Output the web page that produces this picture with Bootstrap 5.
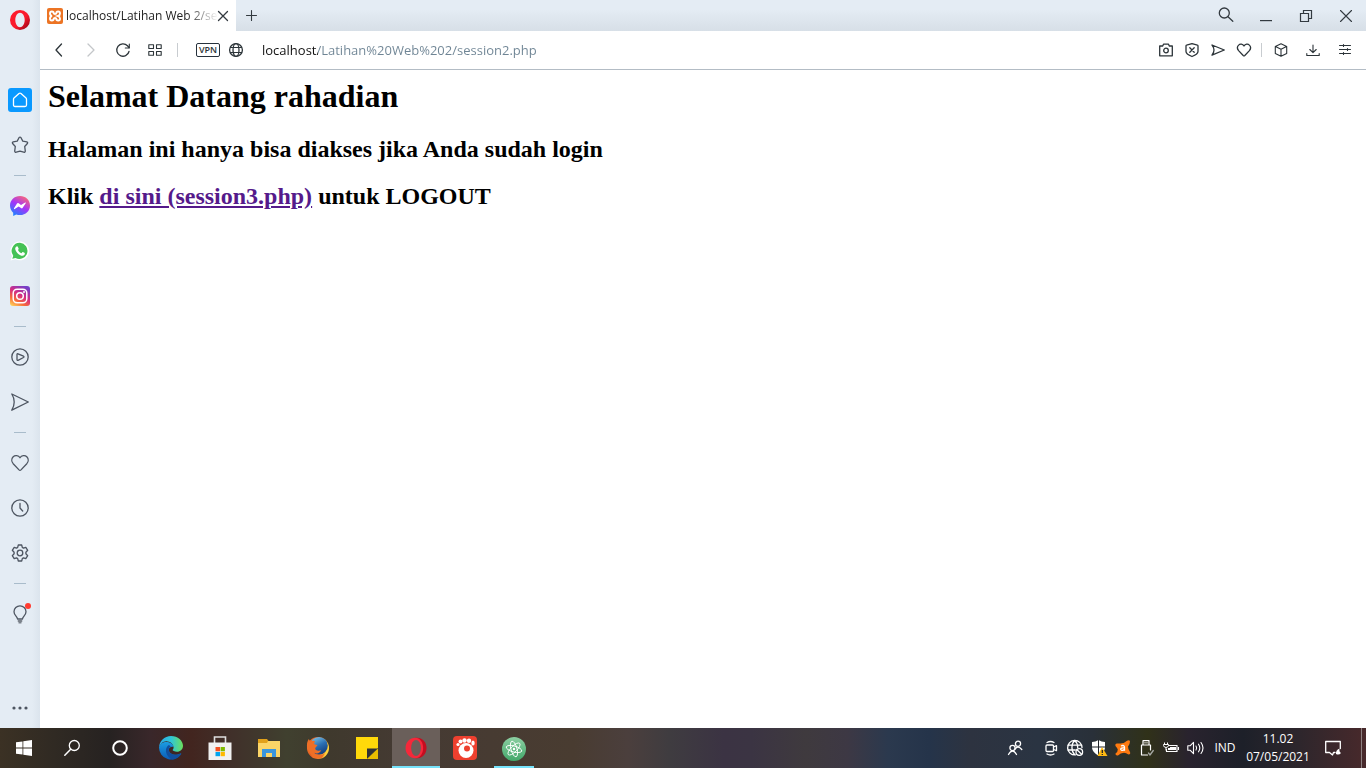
<!DOCTYPE html>
<html lang="id">
<head>
<meta charset="utf-8">
<meta name="viewport" content="width=device-width, initial-scale=1">
<title>localhost/Latihan Web 2/session2.php</title>
<link href="https://cdn.jsdelivr.net/npm/bootstrap@5.3.0/dist/css/bootstrap.min.css" rel="stylesheet">
<style>
  body { font-family: "Open Sans", "Noto Sans", sans-serif; font-size: 12px; line-height: 18px; color: #111; background: #fff; }
  button { background: none; border: 0; padding: 0; color: inherit; display: flex; align-items: center; justify-content: center; flex: none; }
  svg { display: block; flex: none; overflow: visible; }
  .ln { fill: none; stroke: currentColor; stroke-width: 1.3; stroke-linejoin: round; stroke-linecap: round; }

  .rail { width: 40px; background: linear-gradient(90deg, #e4ecf4 80%, #dbe4ed); color: #4d5561; }
  .rail button { width: 40px; height: 45px; }
  .rail .brand { height: 40px; margin-bottom: 37px; }
  .rail .more { height: 40px; }
  .rail hr { width: 12px; height: 1px; margin: 8px 0 7px; border: 0; background: #a9bccb; opacity: 1; flex: none; }
  .home-tile { width: 24px; height: 24px; border-radius: 3px; background: #0a99ff; color: #fff; }

  .tabstrip { height: 31px; background: linear-gradient(#e4ecf4 30%, #d7dfe7); color: #333a40; }
  .tab { width: 196px; background: #fff; padding: 0 8px 0 7px; }
  .tab-title { font-size: 12px; color: #222; margin-left: 3px; -webkit-mask-image: linear-gradient(90deg, #000 120px, transparent 152px); mask-image: linear-gradient(90deg, #000 120px, transparent 152px); }
  .plus { width: 31px; }
  .win { width: 40px; }

  .toolbar { height: 39px; border-bottom: 1px solid #b3bcc5; color: #2c3439; padding-left: 3px; }
  .tool { width: 32px; height: 32px; }
  .tool-s { width: 26px; height: 32px; }
  .dim { color: #c3c6c9; }
  .bar { width: 1px; height: 14px; background: #c8ccd0; }
  .vpn { width: 24px; height: 14px; border: 1px solid #26313c; border-radius: 2px; font-size: 9px; line-height: 12px; font-weight: 600; margin-left: 18px; }
  .url { border: 0; outline: 0; background: linear-gradient(90deg, #111 56px, #6e8494 56px) text; -webkit-background-clip: text; -webkit-text-fill-color: transparent; font-size: 13px; min-width: 0; padding: 0; margin-left: 12px; }

  .page { padding: 8px; font-family: "Liberation Serif", serif; color: #000; }
  .page h1 { font-size: 32px; line-height: 37px; font-weight: 700; margin: 0 0 21px; }
  .page h2 { font-size: 24px; line-height: 27px; font-weight: 700; margin: 0 0 20px; }
  .page a { color: #551a8b; }

  .taskbar { height: 40px; color: #fff; background: linear-gradient(90deg, #3b3124 0, #302a23 4%, #262221 8%, #39272a 11%, #42251f 14%, #40302a 17%, #40402f 21%, #3f392d 24%, #453a33 30%, #493c31 42%, #4b3f3d 46%, #3f3c40 49%, #3b3343 53%, #3b3443 55%, #3f3a3e 59%, #3d3844 62%, #2b394e 65%, #25344a 68%, #2d3340 71%, #2a3442 76%, #293039 80%, #303119 84%, #29232e 87%, #1d2029 91%, #2d262c 95%, #48292b 100%); }
  .task { width: 48px; height: 40px; }
  .apps { gap: 1px; margin-left: 3px; }
  .active { background: #6a5f5a; border-bottom: 2px solid #76e3fb; padding-top: 2px; }
  .running { padding-top: 2px; background: linear-gradient(#76e3fb, #76e3fb) center bottom / 40px 2px no-repeat; }
  .tray { width: 24px; height: 40px; }
  .people { margin-right: 12px; }
  .lang { width: 36px; }
  .clock { width: 70px; height: 40px; font-size: 12px; line-height: 18px; }
  .note { width: 40px; margin-right: 8px; }
  .desk { width: 5px; height: 40px; border-left: 1px solid #8d8080; }
</style>
</head>
<body class="vh-100 d-flex flex-column overflow-hidden">

<div class="d-flex flex-grow-1 overflow-hidden">
  <nav class="rail d-flex flex-column align-items-center flex-shrink-0" aria-label="Sidebar">
    <button class="brand" aria-label="Opera"><svg width="20" height="20" viewBox="0 0 20 20"><defs><linearGradient id="o1" x2="1" y2="1"><stop offset="0" stop-color="#ff1b2d"/><stop offset=".55" stop-color="#fa1a2c"/><stop offset="1" stop-color="#8c0012"/></linearGradient></defs><path fill="url(#o1)" fill-rule="evenodd" d="M10 0a10 10 0 1 0 0 20 10 10 0 1 0 0-20zM10 2.800c2.600 0 4.700 3.200 4.700 7.200s-2.100 7.200-4.700 7.200S5.300 14 5.300 10 7.400 2.800 10 2.800z"/></svg></button>
    <button aria-label="Speed dial"><span class="home-tile d-flex align-items-center justify-content-center"><svg class="ln" width="16" height="16" viewBox="0 0 16 16"><path d="M1.500 7.200Q1.500 6.500 2 6L7 1.500q1-.8 2 0L14 6q.5.500.5 1.200V13q0 1.500-1.500 1.500H3Q1.500 14.500 1.500 13z"/></svg></span></button>
    <button aria-label="Pinboard"><svg class="ln" width="18" height="18" viewBox="0 0 18 18"><path d="M8 1.700q1-1.300 2 0l1.800 3.400 4 .7q1.300.5.600 1.700l-2.700 3 .6 4.700q-.2 1.400-1.600 1L9 15.200l-3.700 1q-1.400.4-1.600-1l.6-4.700-2.700-3Q.9 6.300 2.200 5.800l4-.7z"/></svg></button>
    <hr>
    <button aria-label="Messenger"><svg width="20" height="20" viewBox="0 0 20 20"><defs><linearGradient id="m1" x1=".2" y1="1" x2=".8" y2="0"><stop offset="0" stop-color="#1687ff"/><stop offset=".5" stop-color="#a334fa"/><stop offset="1" stop-color="#ff6b70"/></linearGradient></defs><path fill="url(#m1)" d="M10 0C4.300 0 0 4.100 0 9.600c0 2.900 1.300 5.500 3.200 7.200V20l3-1.500c1.200.4 2.500.6 3.800.6 5.700 0 10-4.200 10-9.600S15.700 0 10 0z"/><path fill="#fff" d="M4 12.300l3-4.700q.7-1 1.700-.3l2.300 1.700 4.200-2.400q1-.4.500.6l-3 4.600q-.6 1-1.700.3L8.700 10.500l-4 2.600q-1 .2-.7-.8z"/></svg></button>
    <button aria-label="WhatsApp"><svg width="18" height="18" viewBox="0 0 18 18"><path fill="#fff" d="M9-.5A9.400 9.400 0 0 0 1 14L-.5 18.500 4.500 17.300A9.400 9.400 0 1 0 9-.5z"/><path fill="#45c255" d="M9 .8A8.100 8.100 0 0 0 2.300 13.800L1.300 16.800 4.500 16A8.100 8.100 0 1 0 9 .8z"/><path fill="#fff" d="M5.500 4.500q.8-.6 1.300.2l.9 2q.1.400-.7 1.300c1 1.900 2 2.700 3.500 3.300l1-1.200q.3-.3 2.300.9.300 2.400-2.300 2.800C8.500 14 4 9.500 4.200 6.600q.2-1.500 1.300-2.100z"/></svg></button>
    <button aria-label="Instagram"><svg width="20" height="20" viewBox="0 0 20 20"><defs><linearGradient id="i1" x1=".1" y1="1" x2=".7" y2="0"><stop offset="0" stop-color="#fed35a"/><stop offset=".3" stop-color="#f76b3a"/><stop offset=".6" stop-color="#d52c83"/><stop offset="1" stop-color="#7540c8"/></linearGradient></defs><rect width="20" height="20" rx="3" fill="url(#i1)"/><g fill="none" stroke="#fff" stroke-width="1.500"><rect x="3.200" y="3.200" width="13.600" height="13.600" rx="4"/><circle cx="10" cy="10" r="3.300"/></g><circle cx="14" cy="6" r="1" fill="#fff"/></svg></button>
    <hr>
    <button aria-label="Player"><svg class="ln" width="18" height="18" viewBox="0 0 18 18"><circle cx="9" cy="9" r="8.200"/><path d="M6 6.500q0-1 1-.7l5.500 2.400q1 .6 0 1.300L7 12.300q-1 .3-1-.7z"/></svg></button>
    <button aria-label="My Flow"><svg class="ln" width="18" height="18" viewBox="0 0 18 18"><path d="M.8 1L17.300 9 .8 17.200q2.400-4 2.400-8.200T.8 1z"/></svg></button>
    <hr>
    <button aria-label="Bookmarks"><svg class="ln" width="18" height="18" viewBox="0 0 18 18"><path d="M9 3.800C10.500 1.200 14 .9 15.800 2.700c2 2 1.700 5 0 7L10 15.900q-1 1-2 0L2.200 9.700c-1.700-2-2-5 0-7C4 .9 7.500 1.200 9 3.800z"/></svg></button>
    <button aria-label="History"><svg class="ln" width="18" height="18" viewBox="0 0 18 18"><circle cx="9" cy="9" r="8.200"/><path d="M9 4.500V9l2.700 3"/></svg></button>
    <button aria-label="Settings"><svg class="ln" width="18" height="18" viewBox="0 0 18 18"><circle cx="9" cy="9" r="2.800"/><path d="M7.300 1h3.400l.6 2.400 1.200.7 2.300-.8 1.900 3-1.800 1.900v1.600l1.800 1.900-1.900 3-2.300-.8-1.200.7-.6 2.400H7.300l-.6-2.400-1.200-.7-2.300.8-1.900-3 1.800-1.900V8.200L1.300 6.300l1.900-3 2.300.8 1.200-.7z"/></svg></button>
    <hr>
    <button aria-label="Tips"><svg class="ln" width="18" height="20" viewBox="0 0 18 20"><path d="M6.500 15C6.500 12.500 3 11.500 3 7.800a6 6 0 0 1 12 0c0 3.700-3.500 4.700-3.500 7.200z"/><path d="M7.500 17h3M8.300 18.700h1.400" stroke="#7b828b" stroke-width="1.800"/><circle cx="17" cy="2" r="3" fill="#ff3b30" stroke="none"/></svg></button>
    <button class="more mt-auto" aria-label="More"><svg width="16" height="4" viewBox="0 0 16 4" fill="currentColor"><circle cx="2" cy="2" r="1.600"/><circle cx="8" cy="2" r="1.600"/><circle cx="14" cy="2" r="1.600"/></svg></button>
  </nav>

  <div class="flex-grow-1 d-flex flex-column overflow-hidden">
    <header class="tabstrip d-flex align-items-stretch flex-shrink-0">
      <div class="tab d-flex align-items-center">
        <svg width="16" height="16" viewBox="0 0 16 16"><rect width="16" height="16" rx="2" fill="#ec7424"/><path d="M4.800 3.500Q3 3.500 3 5.500T5 8q-2 .5-2 2.500t1.800 2Q6.800 12.500 6.800 10.500 8 9.500 9.200 10.500q0 2 2 2T13 10.500 11 8q2-.5 2-2.500t-1.800-2q-2 0-2 2Q8 6.500 6.800 5.500q0-2-2-2z" fill="none" stroke="#fff" stroke-width="1.900"/></svg>
        <span class="tab-title text-nowrap">localhost/Latihan Web 2/se</span>
        <button class="ms-auto" aria-label="Close tab"><svg class="ln" width="12" height="12" viewBox="0 0 12 12"><path d="M1.500 1.500l9 9m0-9l-9 9"/></svg></button>
      </div>
      <button class="plus" aria-label="New tab"><svg class="ln" width="12" height="12" viewBox="0 0 12 12"><path d="M.5 5.500h10m-5-5v10" stroke-width="1.100"/></svg></button>
      <button class="win ms-auto" aria-label="Search tabs"><svg class="ln" width="16" height="18" viewBox="0 0 16 18"><circle cx="6.300" cy="6" r="5"/><path d="M10 9.700l4.800 4.500"/></svg></button>
      <button class="win" aria-label="Minimize"><svg width="12" height="12" viewBox="0 0 12 12"><path d="M0 10h12v1.200H0z" fill="currentColor"/></svg></button>
      <button class="win" aria-label="Restore"><svg width="12" height="12" viewBox="0 0 12 12" fill="none" stroke="currentColor"><path d="M.5 3.500h8v8h-8zM3.500 3.500v-3h8v8h-3" stroke-width="1.200"/></svg></button>
      <button class="win" aria-label="Close window"><svg class="ln" width="12" height="12" viewBox="0 0 12 12"><path d="M.5.5l11 11m0-11l-11 11" stroke-width="1.100"/></svg></button>
    </header>

    <div class="toolbar d-flex align-items-center flex-shrink-0">
      <button class="tool" aria-label="Back"><svg class="ln" width="8" height="14" viewBox="0 0 8 14"><path d="M6.500 1L1 7l5.500 6"/></svg></button>
      <button class="tool dim" aria-label="Forward"><svg class="ln" width="8" height="14" viewBox="0 0 8 14"><path d="M1 1l6 6-6 6"/></svg></button>
      <button class="tool" aria-label="Reload"><svg class="ln" width="14" height="14" viewBox="0 0 14 14"><path d="M13 8.500a6.200 6.200 0 1 1-1.500-5.700L13 4.500"/><path d="M13.300 1v4h-4" stroke-width="1.100"/></svg></button>
      <button class="tool" aria-label="Speed dial tiles"><svg class="ln" width="14" height="12" viewBox="0 0 14 12"><path d="M.8.800h4.700v3.700H.8zM8.500.800h4.700v3.700H8.500zM.8 7.500h4.700v3.700H.8zM8.500 7.500h4.700v3.700H8.500z" stroke-width="1.100"/></svg></button>
      <span class="bar" style="margin-left:6px"></span>
      <button class="vpn" aria-label="VPN">VPN</button>
      <button class="tool-s ms-1" aria-label="Site information"><svg class="ln" width="14" height="14" viewBox="0 0 14 14"><circle cx="5" cy="7" r="6.400" transform="translate(1)"/><ellipse cx="6" cy="7" rx="3" ry="6.400"/><path d="M.5 4.500h11m-11 5h11" stroke-width="1"/></svg></button>
      <input class="url flex-grow-1 me-3" type="text" aria-label="Address" value="localhost/Latihan%20Web%202/session2.php">
      <button class="tool-s" aria-label="Snapshot"><svg class="ln" width="14" height="14" viewBox="0 0 14 14"><path d="M.7 3h3L4.500 1.200h5L10.300 3h3v9.800H.7z"/><circle cx="7" cy="7.500" r="2.300"/></svg></button>
      <button class="tool-s" aria-label="Ad blocker"><svg class="ln" width="14" height="14" viewBox="0 0 14 14"><path d="M7 .7l5.500 1.500Q13 2.300 13 3v5.500c0 2.500-3 3.800-6 5-3-1.200-6-2.500-6-5V3q0-.7.500-.8z"/><path d="M4.800 4.800l4.400 4.400m0-4.400L4.800 9.200"/></svg></button>
      <button class="tool-s" aria-label="Send to My Flow"><svg class="ln" width="14" height="14" viewBox="0 0 14 14"><path d="M1 2l12.300 5L1 12.200Q3 9.500 3 7T1 2z"/></svg></button>
      <button class="tool-s" aria-label="Add to bookmarks"><svg class="ln" width="14" height="14" viewBox="0 0 14 14"><path d="M7 3C8.200.8 11 .6 12.400 2.100c1.500 1.500 1.200 4 0 5.500L7.800 12.500q-.8.700-1.600 0L1.600 7.600C.4 6.100.1 3.600 1.600 2.100 3 .6 5.800.8 7 3z"/></svg></button>
      <span class="bar ms-1"></span>
      <button class="tool ms-1" aria-label="Extensions"><svg class="ln" width="14" height="14" viewBox="0 0 14 14"><path d="M6 .7l5.700 2.700v7L6 13.300.3 10.400v-7zM.5 3.500L6 6.200l5.500-2.700M6 6.200v7" stroke-width="1.100"/></svg></button>
      <button class="tool" aria-label="Downloads"><svg class="ln" width="14" height="14" viewBox="0 0 14 14"><path d="M6 2v7.500M2.800 6.500L6 9.700l3.200-3.200M-.2 10.500v2h12.400v-2" stroke-width="1.100"/></svg></button>
      <button class="tool me-1" aria-label="Easy setup"><svg class="ln" width="14" height="14" viewBox="0 0 14 14"><path d="M.5 2.500h11M.5 6.500h11M.5 10.500h11M4.500 1.500v2M8.500 5.500v2M4.500 9.500v2" stroke-width="1.100"/></svg></button>
    </div>

    <main class="page flex-grow-1 overflow-auto">
      <h1>Selamat Datang rahadian</h1>
      <h2>Halaman ini hanya bisa diakses jika Anda sudah login</h2>
      <h2>Klik <a href="session3.php">di sini (session3.php)</a> untuk LOGOUT</h2>
    </main>
  </div>
</div>

<footer class="taskbar d-flex align-items-center flex-shrink-0">
  <button class="task" aria-label="Start"><svg width="16" height="16" viewBox="0 0 16 16" fill="#fff"><path d="M0 2.300l6.500-.9v6.100H0zM7.300 1.200L16 0v7.500H7.300zM0 8.400h6.500v6.100L0 13.700zM7.300 8.400H16V16l-8.700-1.300z"/></svg></button>
  <button class="task" aria-label="Search"><svg class="ln" width="16" height="16" viewBox="0 0 16 16"><circle cx="10.300" cy="5.500" r="5"/><path d="M6.700 9.300L.8 15.200" stroke-width="1.500"/></svg></button>
  <button class="task" aria-label="Cortana"><svg width="16" height="16" viewBox="0 0 16 16"><circle cx="8" cy="8" r="6.800" fill="none" stroke="#fff" stroke-width="2"/></svg></button>
  <div class="apps d-flex">
    <button class="task" aria-label="Edge"><svg width="24" height="24" viewBox="0 0 24 24"><defs><linearGradient id="e1"><stop offset="0" stop-color="#2aa9e8"/><stop offset=".5" stop-color="#2fc5d8"/><stop offset="1" stop-color="#6be05c"/></linearGradient><linearGradient id="e2" x2="0" y2="1"><stop offset="0" stop-color="#1b9de2"/><stop offset="1" stop-color="#0b5cb8"/></linearGradient></defs><path fill="url(#e2)" d="M0 11.500C1 7 5 5.500 8.500 6c4 .5 6 3 6 5-2-1-5 .5-4.700 3 .3 4 6.200 6.500 11.700 3.500.5-.2.800.2.500.6A12 12 0 0 1 0 11.500z"/><path fill="#104f9f" d="M9 9.500c-4 4-2 11 4.500 14.300 4 -.5 7-2.800 8.800-5.800.3-.5-.1-.8-.6-.5-6 2.800-12 .3-12-4 0-1.500 1-2.600 2-3.100-.8-1-1.700-1.300-2.700-.9z"/><path fill="url(#e1)" d="M0 12C0 5 5.400 0 12 0c7 0 12 4.800 12 9.800 0 3.500-2.700 6-6 6-2.500 0-4.400-1-4.400-1.700 0-.5 1-1 1-2.800C14.600 8 11 5.200 7.300 5.200 4 5.200.7 8 0 12z"/></svg></button>
    <button class="task" aria-label="Microsoft Store"><svg width="24" height="24" viewBox="0 0 24 24"><path d="M6.500 8V1h11v7" fill="none" stroke="#dedede" stroke-width="1.600"/><path d="M.5 6.500h23V24H.5z" fill="#f1f1f1"/><path fill="#f25022" d="M7.500 11H12v4.300H7.500z"/><path fill="#7fba00" d="M12.600 11h4.300v4.300h-4.300z"/><path fill="#00a4ef" d="M7.500 16H12v4.200H7.500z"/><path fill="#ffb900" d="M12.600 16h4.300v4.200h-4.300z"/></svg></button>
    <button class="task" aria-label="File Explorer"><svg width="22" height="20" viewBox="0 0 22 20"><path d="M0 1h9l1.500 2H22v15H0z" fill="#e1a11a"/><path d="M0 5h9l1-2h12v16H0z" fill="#fbd567"/><path d="M4 19v-8h14v8h-4v-4H8v4z" fill="#3a96dd"/></svg></button>
    <button class="task" aria-label="Firefox"><svg width="24" height="24" viewBox="0 0 24 24"><defs><linearGradient id="f1" x2="1" y2=".3"><stop offset="0" stop-color="#ef7a2c"/><stop offset=".5" stop-color="#e4561f"/><stop offset=".8" stop-color="#f08a28"/><stop offset="1" stop-color="#ffd23b"/></linearGradient><linearGradient id="f2" x1=".2" x2=".7" y2="1"><stop offset="0" stop-color="#7cc4e6"/><stop offset=".5" stop-color="#2b6fb4"/><stop offset="1" stop-color="#143a78"/></linearGradient></defs><circle cx="12" cy="12" r="11" fill="url(#f1)"/><circle cx="13" cy="9.800" r="8.800" fill="url(#f2)"/><path fill="#ee6f27" d="M1 12Q.5 6 2.800 3l1.500 2.500Q6.500 4.500 9 5L8 8l3.500 1.200-2.300 2.800c-.3 2.300 2.800 3.500 6 2.300-1 2.700-4.200 4-7.200 2.500 3 3.500 8 3 11 .5L16 22 7 22z"/></svg></button>
    <button class="task" aria-label="Sticky Notes"><svg width="22" height="22" viewBox="0 0 22 22"><path fill="#ffd90a" d="M0 0h22v11L11 22H0z"/><path fill="#303234" d="M11 11.500h11L11 22z"/><path fill="#e8bd00" d="M22 11.500V22H11z"/></svg></button>
    <button class="task active" aria-label="Opera browser"><svg width="22" height="22" viewBox="0 0 24 24"><path fill="#c40e20" d="M11 .8h2c6 0 10.500 4.800 10.500 11.200S19 23.200 13 23.200h-2z"/><path fill="#f5283a" d="M11.500.8C5 .8.600 5.500.600 12S5 23.200 11.500 23.200c4.500 0 8.300-5.200 8.300-11.200S16 .8 11.500.8z"/><ellipse cx="12" cy="12" rx="5.300" ry="8.800" fill="#6a5f5a"/></svg></button>
    <button class="task" aria-label="GOM Player"><svg width="24" height="24" viewBox="0 0 24 24"><rect width="24" height="24" rx="4" fill="#ee402f"/><g fill="#fff"><circle cx="13" cy="14.500" r="7.500"/><circle cx="5" cy="8.500" r="1.600"/><circle cx="7.500" cy="5.500" r="2"/><circle cx="11.500" cy="4.500" r="2.200"/><circle cx="16" cy="4.800" r="2.200"/><ellipse cx="20" cy="7" rx="1.700" ry="2.500"/></g><circle cx="14" cy="12.500" r="3" fill="#ee402f"/></svg></button>
    <button class="task running" aria-label="Atom"><svg width="24" height="24" viewBox="0 0 24 24"><defs><linearGradient id="a1" x2="0" y2="1"><stop offset="0" stop-color="#8ccfa2"/><stop offset="1" stop-color="#43a86a"/></linearGradient></defs><circle cx="12" cy="12" r="12" fill="url(#a1)"/><g fill="none" stroke="#fff" stroke-width=".9"><ellipse cx="12" cy="12" rx="3" ry="8" transform="rotate(-15 12 12)"/><ellipse cx="12" cy="12" rx="3" ry="8" transform="rotate(45 12 12)"/><ellipse cx="12" cy="12" rx="3" ry="8" transform="rotate(105 12 12)"/></g><circle cx="12" cy="12" r="1.200" fill="#fff"/></svg></button>
  </div>

  <button class="tray people ms-auto" aria-label="People"><svg class="ln" width="16" height="16" viewBox="0 0 16 16"><circle cx="11" cy="3.800" r="2.600"/><path d="M8 9q3-4 6.800.500"/><circle cx="5.500" cy="8" r="2.600"/><path d="M1.500 14.500q4-7 8 0"/></svg></button>
  <button class="tray" aria-label="Meet now"><svg class="ln" width="14" height="16" viewBox="0 0 14 16"><rect x="2" y="5" width="7.500" height="6.500" rx="1"/><path d="M9.500 7l3-1.300v5l-3-1.200M3 2.500q3.500-2 7 0M3 14q3.500 2 7 0"/></svg></button>
  <button class="tray" aria-label="Network"><svg class="ln" width="16" height="16" viewBox="0 0 16 16"><path d="M8.500 14.800A7.200 7.200 0 1 1 15 7.500M.8 5.200h13.500M.8 10h7.500M7.700.6C4 4 4 11 7.700 14.800M7.700.6C10 2.500 10.700 5 10.700 7.500"/><circle cx="12.300" cy="12" r="3.300"/><path d="M10 9.700l4.600 4.600"/></svg></button>
  <button class="tray" aria-label="Windows Security"><svg width="16" height="16" viewBox="0 0 16 16"><path fill="#fff" d="M7.500 0q3 2 6.500 2v5c0 4-3 6.500-6.500 8.500C4 13.500 1 11 1 7V2q3.500 0 6.500-2z"/><path stroke="#20242a" d="M7.500 0v15M1 7h13"/><path fill="#fdb913" d="M11 7l5.500 9h-10z"/><path stroke="#222" stroke-width="1.300" d="M11.300 10v3m0 1v1"/></svg></button>
  <button class="tray" aria-label="Avast"><svg width="16" height="16" viewBox="0 0 16 16"><path fill="#ff7a10" d="M5 3.500Q9 3.800 12 .8 14.500-.8 15 1.500 15 4 13 6.500q0 3 2 5.500.8 2.500-1.500 2.500Q11 13 9 12.700q-3.500.3-6 2.800-2.800.5-2.500-2Q3 11.500 2.800 9.500 2.500 8 .5 6-.2 3.500 2 3.500z"/><path d="M6 6Q9.500 4.500 9.500 7.500v3.300m0-2.800Q5.600 7.700 5.700 9.500q1.300 2 3.800-.3" fill="none" stroke="#fff" stroke-width="1.300"/></svg></button>
  <button class="tray" aria-label="Safely remove hardware"><svg class="ln" width="14" height="16" viewBox="0 0 14 16"><path d="M3 5V.7h6V5M1.500 5h9v5M1.500 5v10h6M5 2.500v.4M7 2.500v.4" stroke-width="1.200"/><path d="M8.500 13l1.500 2 3.300-4.500" stroke="#a5a7a4"/></svg></button>
  <button class="tray" aria-label="Battery"><svg width="16" height="12" viewBox="0 0 16 12" fill="none" stroke="#fff"><path d="M5.500 3.500H14v6H3.500V7M15.500 5v3" stroke-width="1.100"/><path d="M7 5h6v3H5V6h2z" fill="#fff" stroke="none"/><path d="M1.500.5v2m3-2v2M.5 2.500h5v1Q5 5.500 3 5.500T.5 3.500zM3 5.500v3" stroke-width="1"/></svg></button>
  <button class="tray" aria-label="Volume"><svg class="ln" width="17" height="14" viewBox="0 0 17 14"><path d="M.8 4.700h2.500L6.500 1.300v11.400L3.300 9.300H.8zM9 5q1.300 2 0 4M11.500 3.200q2.600 3.800 0 7.600M14 1.500q4 5.500 0 11" stroke-width="1.100"/></svg></button>
  <button class="lang" aria-label="Input language">IND</button>
  <button class="clock flex-column"><span>11.02</span><span>07/05/2021</span></button>
  <button class="note" aria-label="Notifications"><svg class="ln" width="16" height="16" viewBox="0 0 16 16"><path d="M10 12.500H8.500L7.500 15 4.500 12.500H.7V1.500h14.600v7"/><path d="M14.500 8.500q-4 1.500-3.500 5.500 3 1.500 5-1-2-1-1.500-4.500z" fill="#fff" stroke="none"/></svg></button>
  <button class="desk" aria-label="Show desktop"></button>
</footer>

<script src="https://cdn.jsdelivr.net/npm/bootstrap@5.3.0/dist/js/bootstrap.bundle.min.js"></script>
</body>
</html>
